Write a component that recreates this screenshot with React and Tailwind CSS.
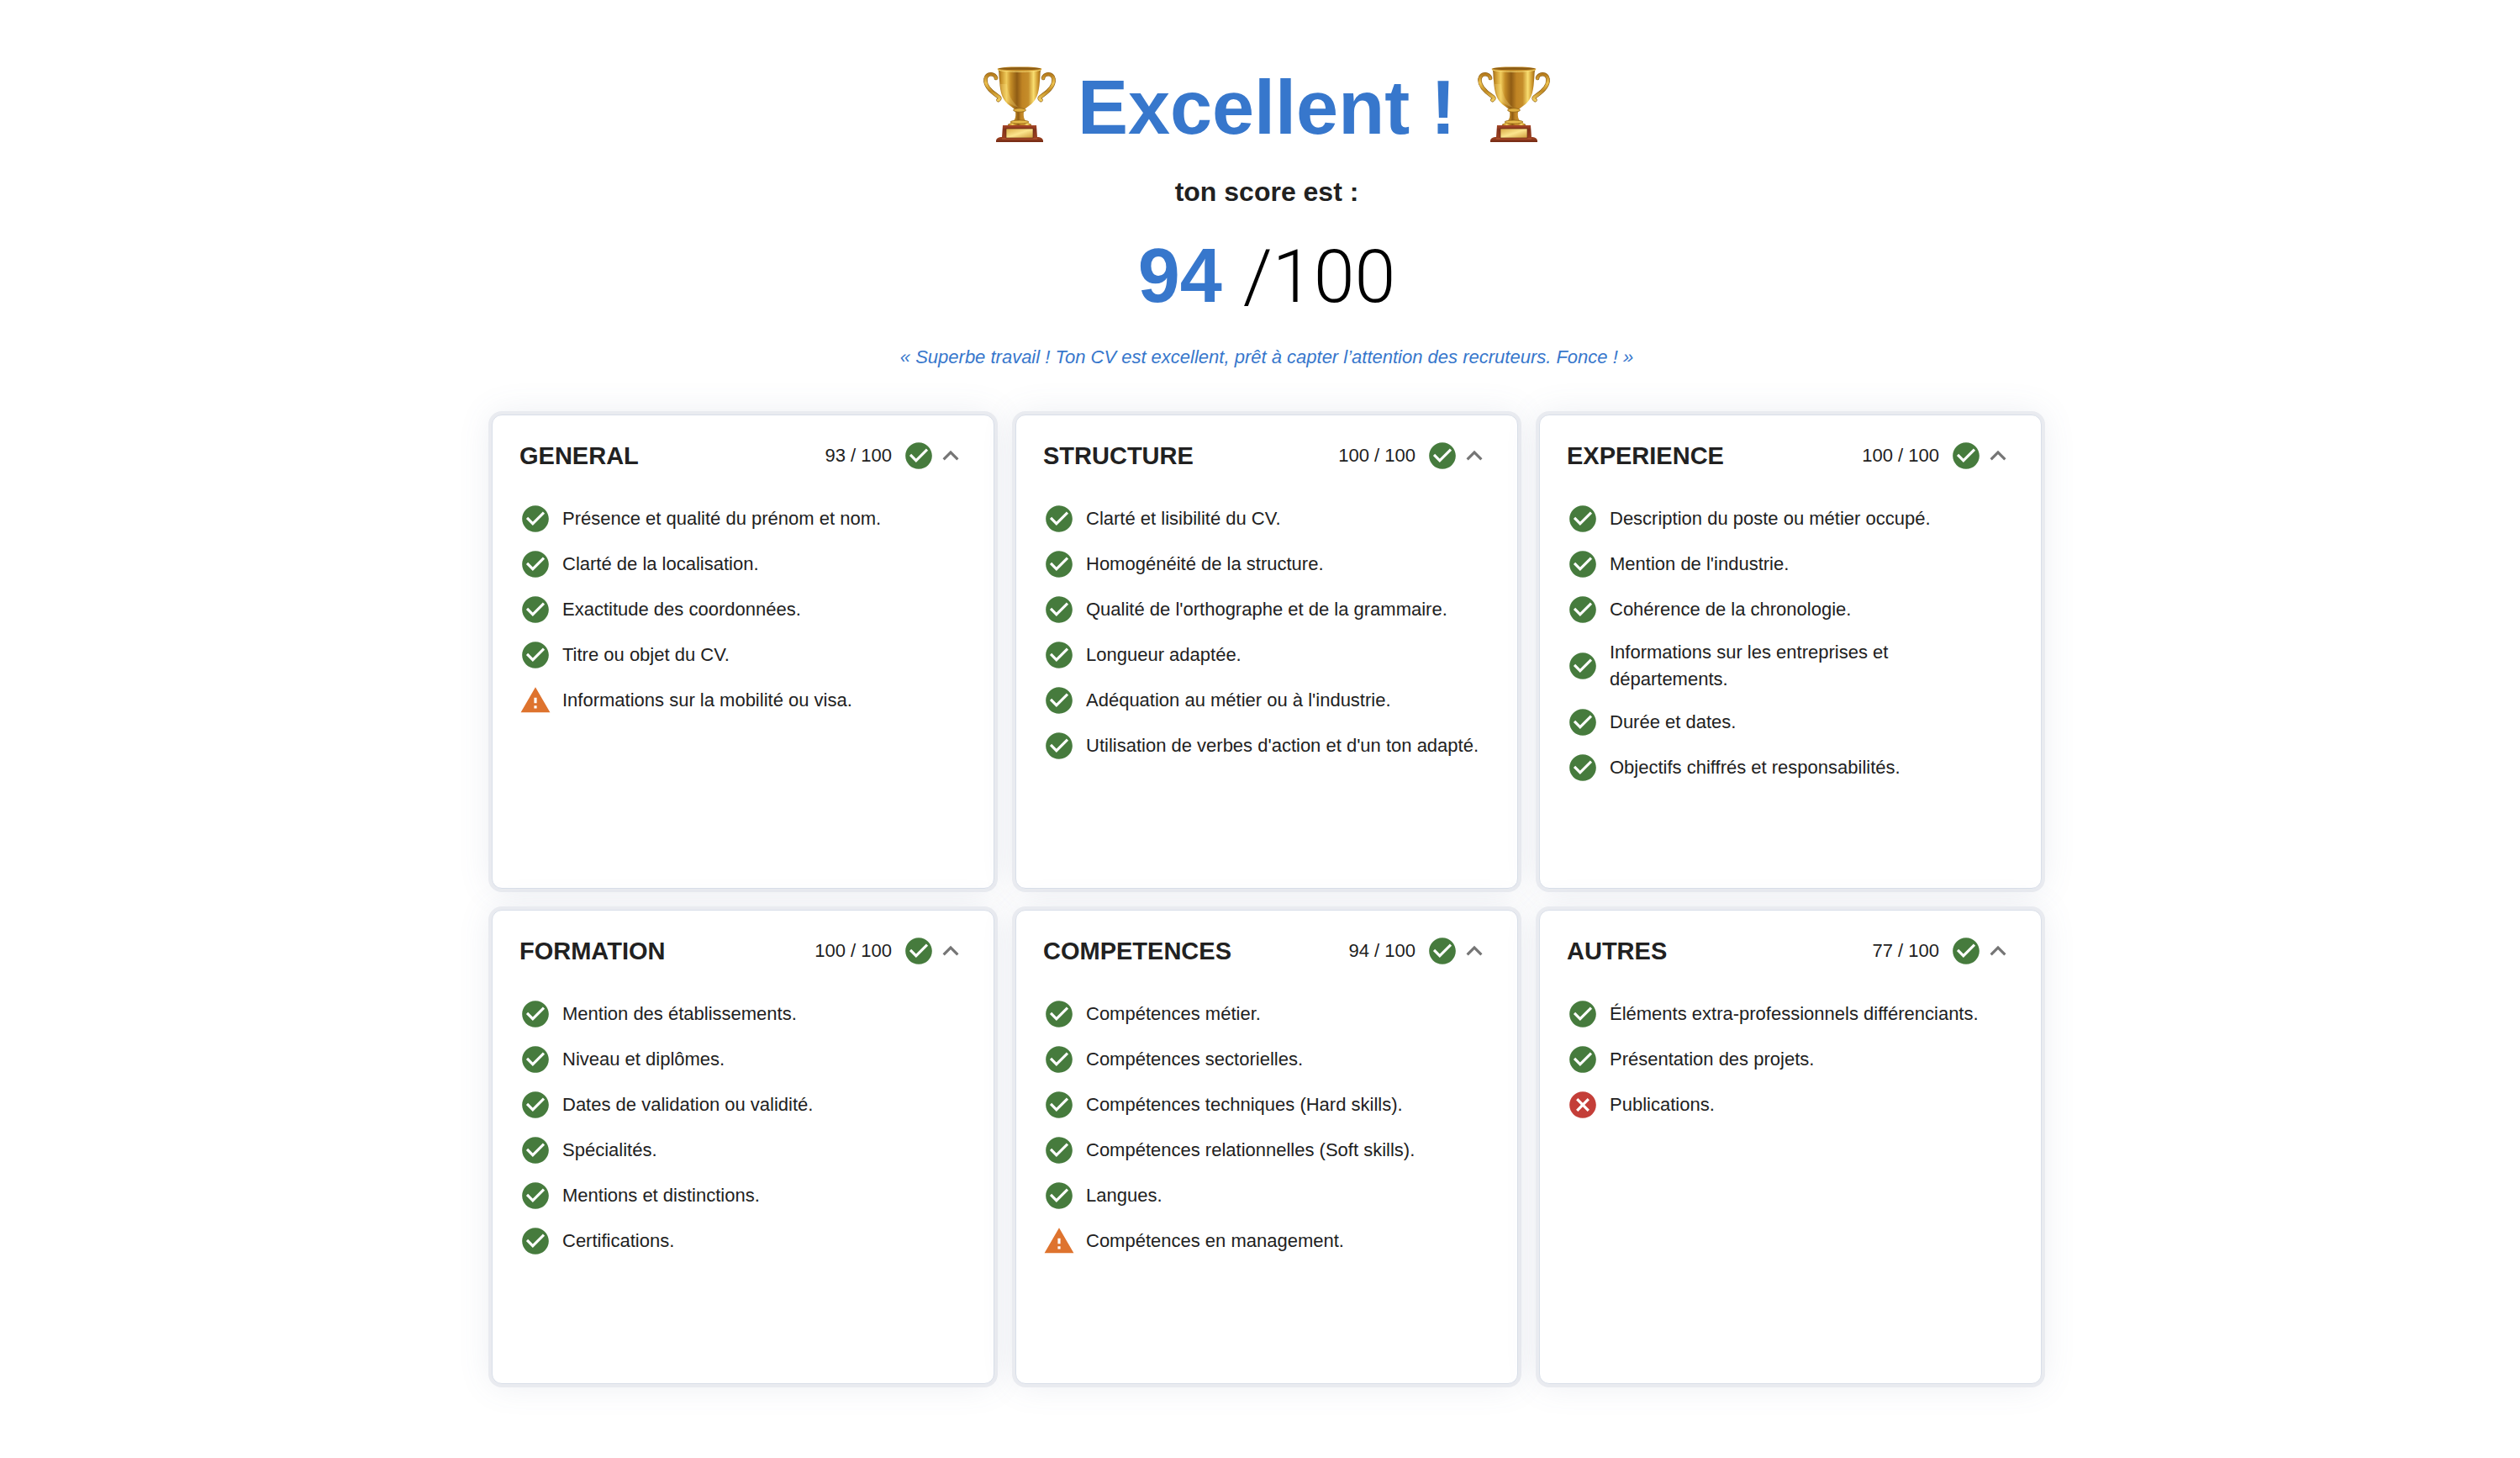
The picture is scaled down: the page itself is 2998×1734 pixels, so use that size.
import { useState } from "react";
import {
    MdCancel,
    MdCheckCircle,
    MdExpandLess,
    MdExpandMore,
    MdWarning,
} from "react-icons/md";

const STATUS = {
    ok: { icon: MdCheckCircle, color: "text-[#467b3d]", label: "Validé" },
    warning: { icon: MdWarning, color: "text-[#de732e]", label: "À améliorer" },
    error: { icon: MdCancel, color: "text-[#c43e38]", label: "Manquant" },
};

const sections = [
    {
        title: "GENERAL",
        score: 93,
        items: [
            { text: "Présence et qualité du prénom et nom." },
            { text: "Clarté de la localisation." },
            { text: "Exactitude des coordonnées." },
            { text: "Titre ou objet du CV." },
            {
                text: "Informations sur la mobilité ou visa.",
                status: "warning",
            },
        ],
    },
    {
        title: "STRUCTURE",
        score: 100,
        items: [
            { text: "Clarté et lisibilité du CV." },
            { text: "Homogénéité de la structure." },
            { text: "Qualité de l'orthographe et de la grammaire." },
            { text: "Longueur adaptée." },
            { text: "Adéquation au métier ou à l'industrie." },
            { text: "Utilisation de verbes d'action et d'un ton adapté." },
        ],
    },
    {
        title: "EXPERIENCE",
        score: 100,
        items: [
            { text: "Description du poste ou métier occupé." },
            { text: "Mention de l'industrie." },
            { text: "Cohérence de la chronologie." },
            { text: "Informations sur les entreprises et départements." },
            { text: "Durée et dates." },
            { text: "Objectifs chiffrés et responsabilités." },
        ],
    },
    {
        title: "FORMATION",
        score: 100,
        items: [
            { text: "Mention des établissements." },
            { text: "Niveau et diplômes." },
            { text: "Dates de validation ou validité." },
            { text: "Spécialités." },
            { text: "Mentions et distinctions." },
            { text: "Certifications." },
        ],
    },
    {
        title: "COMPETENCES",
        score: 94,
        items: [
            { text: "Compétences métier." },
            { text: "Compétences sectorielles." },
            { text: "Compétences techniques (Hard skills)." },
            { text: "Compétences relationnelles (Soft skills)." },
            { text: "Langues." },
            { text: "Compétences en management.", status: "warning" },
        ],
    },
    {
        title: "AUTRES",
        score: 77,
        items: [
            { text: "Éléments extra-professionnels différenciants." },
            { text: "Présentation des projets." },
            { text: "Publications.", status: "error" },
        ],
    },
];

const StatusIcon = ({ status = "ok" }) => {
    const { icon: Icon, color, label } = STATUS[status];
    return <Icon aria-label={label} className={`size-[38px] shrink-0 ${color}`} />;
};

const Trophy = ({ id }) => (
    <svg viewBox="0 0 90 92" className="h-[92px] w-[90px] shrink-0" aria-hidden="true">
        <defs>
            <linearGradient id={`${id}-cup`} x1="0" x2="1" y1="0" y2="0">
                <stop offset="0" stopColor="#8a5a12" />
                <stop offset="0.08" stopColor="#c8922a" />
                <stop offset="0.2" stopColor="#f0cc5c" />
                <stop offset="0.3" stopColor="#c48c26" />
                <stop offset="0.44" stopColor="#8f5c14" />
                <stop offset="0.56" stopColor="#c08424" />
                <stop offset="0.7" stopColor="#c58d2a" />
                <stop offset="0.82" stopColor="#f9de70" />
                <stop offset="0.92" stopColor="#cb942a" />
                <stop offset="1" stopColor="#855510" />
            </linearGradient>
            <linearGradient id={`${id}-handle`} x1="0" x2="0" y1="0" y2="1">
                <stop offset="0" stopColor="#b47a1c" />
                <stop offset="0.35" stopColor="#eec350" />
                <stop offset="0.65" stopColor="#c08a22" />
                <stop offset="1" stopColor="#f0cb5c" />
            </linearGradient>
            <linearGradient id={`${id}-base`} x1="0" x2="0" y1="0" y2="1">
                <stop offset="0" stopColor="#a8492a" />
                <stop offset="0.25" stopColor="#83321a" />
                <stop offset="0.75" stopColor="#9a4020" />
                <stop offset="1" stopColor="#742a14" />
            </linearGradient>
            <linearGradient id={`${id}-plate`} x1="0" x2="1" y1="0" y2="1">
                <stop offset="0" stopColor="#d8a943" />
                <stop offset="0.5" stopColor="#fbe58d" />
                <stop offset="1" stopColor="#cf9c3a" />
            </linearGradient>
        </defs>
        {/* handles */}
        <g fill="none" strokeLinecap="round" strokeLinejoin="round">
            <g stroke="#8a5b13" strokeWidth="4.6">
                <path d="M17 15C16 9 6 8 4.500 16c-1 9 8 16 14 20 3 2 4 3 1 5" />
                <path d="M73 15c1-6 11-7 12.500 1 1 9-8 16-14 20-3 2-4 3-1 5" />
            </g>
            <g stroke={`url(#${id}-handle)`} strokeWidth="3.4">
                <path d="M17 15C16 9 6 8 4.500 16c-1 9 8 16 14 20 3 2 4 3 1 5" />
                <path d="M73 15c1-6 11-7 12.500 1 1 9-8 16-14 20-3 2-4 3-1 5" />
            </g>
        </g>
        {/* cup */}
        <path
            d="M19 4c2 3 1 6 2 14 1 16 4 24 13 30 4 3 6 4 7 6h8c1-2 3-3 7-6 9-6 12-14 13-30 1-8 0-11 2-14z"
            fill={`url(#${id}-cup)`}
        />
        <path d="M22 22c2 15 7 23 22 28-8-7-13-16-14-28z" fill="#ffe98a" opacity="0.25" />
        <ellipse cx="45" cy="4" rx="26.5" ry="2.6" fill="#c8912a" />
        <ellipse cx="45" cy="3.6" rx="25" ry="1.5" fill="#8d5d16" />
        <path d="M19 5c8 3 44 3 52 0" fill="none" stroke="#f9dc74" strokeWidth="1" />
        {/* stem */}
        <path
            d="M39 51h12c1 2 0 3-1 4-1 7 1 11 6 13l3 4H31l3-4c5-2 7-6 6-13-1-1-2-2-1-4z"
            fill={`url(#${id}-cup)`}
        />
        <ellipse cx="45" cy="53" rx="7.5" ry="2.2" fill="#e0b041" stroke="#8a5b13" strokeWidth="0.7" />
        <ellipse cx="45" cy="67" rx="11" ry="2" fill="#e6bb4a" stroke="#8a5b13" strokeWidth="0.7" />
        <rect x="31" y="69" width="28" height="3.5" rx="1.7" fill={`url(#${id}-cup)`} />
        {/* base */}
        <path
            d="M25 71h40l1 14c4 0 6 1 7 4v2H17v-2c1-3 3-4 7-4z"
            fill={`url(#${id}-base)`}
        />
        <path d="M24 87h42" stroke="#b95a33" strokeWidth="1" />
        <rect x="29" y="75" width="32" height="11" fill={`url(#${id}-plate)`} stroke="#5c210d" strokeWidth="0.6" />
    </svg>
);

const SectionCard = ({ title, score, items }) => {
    const [open, setOpen] = useState(true);
    const Chevron = open ? MdExpandLess : MdExpandMore;

    return (
        <section className="min-h-[564px] rounded-xl border border-[#d9dfe9] bg-white px-8 py-7 shadow-[0_0_0_4px_#e9ebf0,0_0_40px_rgba(90,110,150,0.13)]">
            <button
                type="button"
                aria-expanded={open}
                onClick={() => setOpen(!open)}
                className="flex w-full cursor-pointer items-center text-left"
            >
                <h2 className="flex-1 text-[29px] leading-10 font-bold">{title}</h2>
                <span className="mr-[13px] text-[22px] leading-8">{score} / 100</span>
                <StatusIcon />
                <Chevron className="size-[38px] shrink-0 text-[#757575]" />
            </button>
            {open && (
                <ul className="mt-7 pr-2">
                    {items.map(({ text, status }) => (
                        <li key={text} className="flex items-center gap-[13px] py-2">
                            <StatusIcon status={status} />
                            <span className="text-[22px] leading-8">{text}</span>
                        </li>
                    ))}
                </ul>
            )}
        </section>
    );
};

const App = () => {
    return (
        <main className="min-h-screen bg-white pt-15 pb-20 pl-4 font-['Liberation_Sans',Arial,sans-serif] text-[#212121]">
            <header className="flex flex-col items-center text-center">
                <div className="flex items-center gap-6">
                    <Trophy id="left" />
                    <h1 className="pt-2 text-[90px] leading-[120px] font-bold text-[#3777cc]">
                        Excellent !
                    </h1>
                    <Trophy id="right" />
                </div>
                <p className="mt-4 text-[32px] leading-12 font-bold">ton score est :</p>
                <p className="mt-4 text-[90px] leading-[120px] text-black">
                    <strong className="font-bold text-[#3777cc]">94</strong>{" "}
                    <span className="font-['Roboto',sans-serif] text-[88px] font-light">
                        /100
                    </span>
                </p>
                <p className="mt-5 text-[22px] leading-8 text-[#3777cc] italic">
                    « Superbe travail ! Ton CV est excellent, prêt à capter l’attention des
                    recruteurs. Fonce ! »
                </p>
            </header>
            <div className="mx-auto mt-13 grid max-w-[1844px] grid-cols-3 gap-[25px]">
                {sections.map((section) => (
                    <SectionCard key={section.title} {...section} />
                ))}
            </div>
        </main>
    );
};

export default App;
